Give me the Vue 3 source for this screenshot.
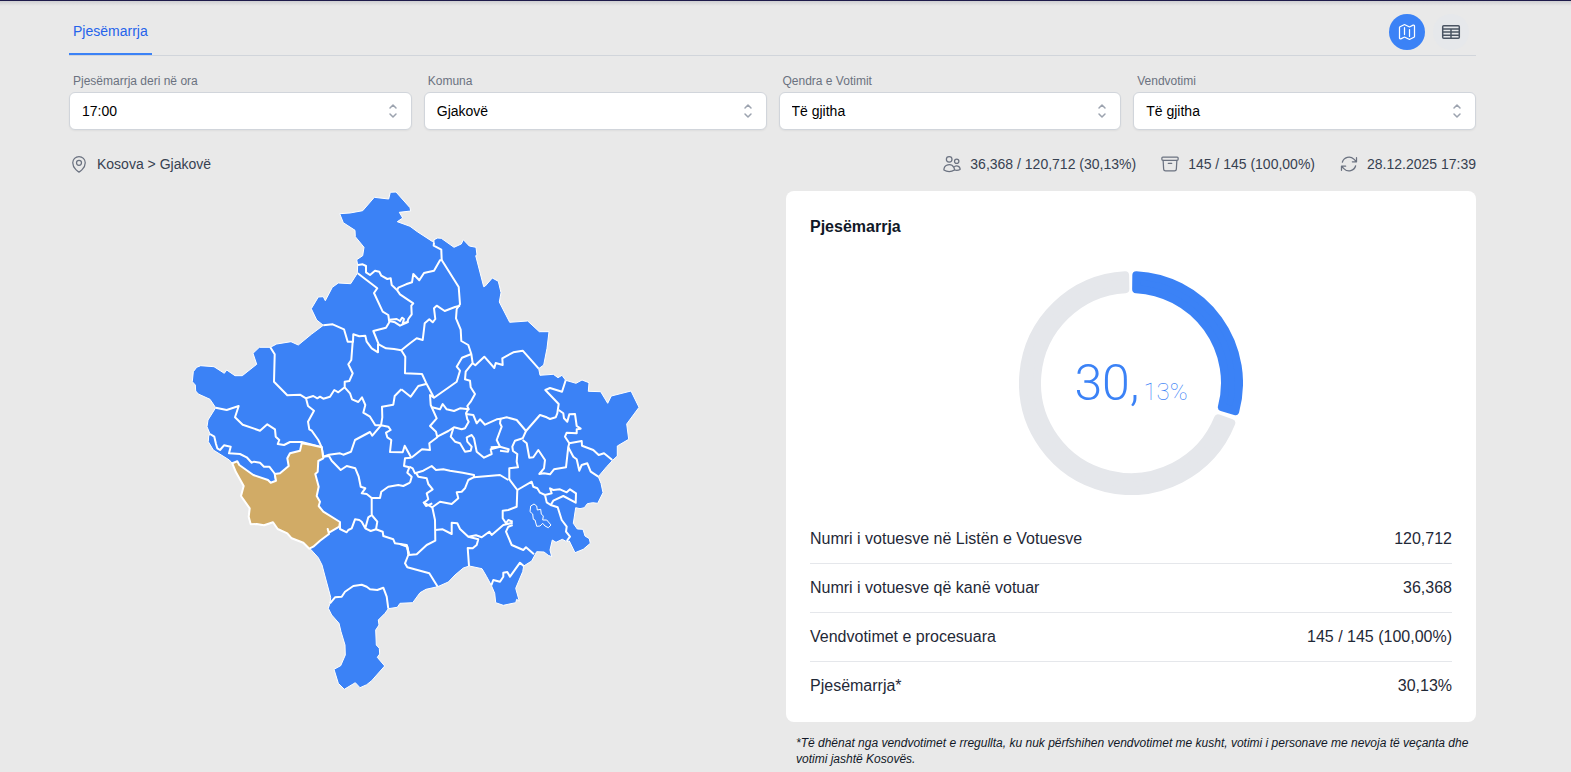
<script setup>
import { ref, computed } from 'vue'

const filters = ref([
  { id: 'ora', label: 'Pjesëmarrja deri në ora', value: '17:00' },
  { id: 'komuna', label: 'Komuna', value: 'Gjakovë' },
  { id: 'qendra', label: 'Qendra e Votimit', value: 'Të gjitha' },
  { id: 'vendvotimi', label: 'Vendvotimi', value: 'Të gjitha' },
])

const rows = [
  { label: 'Numri i votuesve në Listën e Votuesve', value: '120,712' },
  { label: 'Numri i votuesve që kanë votuar', value: '36,368' },
  { label: 'Vendvotimet e procesuara', value: '145 / 145 (100,00%)' },
  { label: 'Pjesëmarrja*', value: '30,13%' },
]

const facts = [
  {
    text: '36,368 / 120,712 (30,13%)',
    icon: 'M15 19.128a9.38 9.38 0 0 0 2.625.372 9.337 9.337 0 0 0 4.121-.952 4.125 4.125 0 0 0-7.533-2.493M15 19.128v-.003c0-1.113-.285-2.16-.786-3.07M15 19.128v.106A12.318 12.318 0 0 1 8.624 21c-2.331 0-4.512-.645-6.374-1.766l-.001-.109a6.375 6.375 0 0 1 11.964-3.07M12 6.375a3.375 3.375 0 1 1-6.75 0 3.375 3.375 0 0 1 6.75 0Zm8.25 2.25a2.625 2.625 0 1 1-5.25 0 2.625 2.625 0 0 1 5.25 0Z',
  },
  {
    text: '145 / 145 (100,00%)',
    icon: 'm20.25 7.5-.625 10.632a2.25 2.25 0 0 1-2.247 2.118H6.622a2.25 2.25 0 0 1-2.247-2.118L3.75 7.5M10 11.25h4M3.375 7.5h17.25c.621 0 1.125-.504 1.125-1.125v-1.5c0-.621-.504-1.125-1.125-1.125H3.375c-.621 0-1.125.504-1.125 1.125v1.5c0 .621.504 1.125 1.125 1.125Z',
  },
  {
    text: '28.12.2025 17:39',
    icon: 'M16.023 9.348h4.992v-.001M2.985 19.644v-4.992m0 0h4.992m-4.993 0 3.181 3.183a8.25 8.25 0 0 0 13.803-3.7M4.031 9.865a8.25 8.25 0 0 1 13.803-3.7l3.181 3.182m0-4.991v4.99',
  },
]

// Ring segment inset by half of its round-joined stroke, which rounds the corners.
const INSET = 4
function ringSegment(from, to, inner = 90, outer = 112) {
  const ri = inner + INSET
  const ro = outer - INSET
  const rad = (d) => (d * Math.PI) / 180
  const at = (r, a) => `${(r * Math.sin(a)).toFixed(2)} ${(-r * Math.cos(a)).toFixed(2)}`
  const pad = (r) => Math.asin(INSET / r)
  const large = to - from > 180 ? 1 : 0
  return [
    `M${at(ro, rad(from) + pad(ro))}`,
    `A${ro} ${ro} 0 ${large} 1 ${at(ro, rad(to) - pad(ro))}`,
    `L${at(ri, rad(to) - pad(ri))}`,
    `A${ri} ${ri} 0 ${large} 0 ${at(ri, rad(from) + pad(ri))}Z`,
  ].join('')
}
const share = 30.13
const sharePath = computed(() => ringSegment(0.7, share * 3.6 - 1.2))
const restPath = computed(() => ringSegment(share * 3.6 + 1.2, 359))

// Map sheets: every sheet has its own origin and stores points in thirds of a unit.
const sheets = {
  north: [300, 185],
  west: [180, 330],
  east: [380, 330],
  southeast: [400, 460],
  south: [290, 520],
}
function points(sheet, list) {
  const [ox, oy] = sheets[sheet]
  return list
    .trim()
    .split(/\s+/)
    .map((p) => {
      const [x, y] = p.split(',').map(Number)
      return `${(ox + x / 3).toFixed(1)},${(oy + y / 3).toFixed(1)}`
    })
    .join(' ')
}

const outline = [
  points('north', '119,86 150,84 188,77 223,37 240,39 266,42 271,22 288,21 330,68 332,78 298,82 308,99 292,110 330,124 352,140 398,170 402,172 402,164 413,159 424,160 462,187 484,177 490,164 508,183 528,187 531,210 527,212 551,305 556,303 577,279 595,289 603,323 598,351 629,412 683,408 718,440 747,440 741,490 731,540 716,551'),
  points('east', '480,136 520,133 534,143 546,136 557,151 588,160 606,150 627,158 625,184 662,185 683,220 694,198 753,183 777,232 740,282 746,328 712,348 712,378 697,392 680,410 655,440'),
  points('southeast', '595,50 603,70 609,98 593,130 578,128 562,131 553,143 540,146 527,143 520,190 532,207 549,208 555,228 568,236 571,250 550,268 525,278 508,243 500,245 487,238 468,247 457,240 450,270 455,290 445,286 432,276 410,275 395,303 371,318 368,335 347,385 358,424 350,418 347,428 310,436 287,428 284,400 274,376 260,350 246,326 208,318 190,324 165,345 145,366 113,380'),
  points('south', '408,208 390,218 368,248 330,250 322,262 295,266 285,280 265,300 267,315 257,330 259,375 268,385 269,402 262,412 284,438 245,482 230,494 210,503 196,488 163,508 145,490 132,448 152,437 166,405 165,375 153,335 147,310 125,285 115,265 120,250 122,232 108,180 96,135 85,113 62,88'),
  points('west', '388,656 370,638 335,625 322,610 293,597 279,577 252,586 230,582 212,583 206,560 209,535 183,498 191,468 168,427 157,400 148,390 100,360 85,335 86,318 90,312 81,290 84,270 107,233 90,208 55,192 47,183 46,165 37,155 40,125 50,112 62,107 102,110 133,130 140,120 165,137 187,137 230,103 219,70 238,52 271,52 290,42 333,35 355,45 395,12'),
  points('north', '70,421 50,405 34,371 55,336 70,335 76,347 97,307 115,294 152,296 172,265 173,240 170,224 188,212 192,187 166,155 165,136 130,113'),
].join(' ')

const selected = points('west', '157,400 172,394 178,405 220,435 264,450 272,458 288,452 284,432 300,430 326,408 322,385 330,370 360,362 365,340 395,345 425,352 430,385 415,393 413,425 406,432 416,470 410,498 420,515 416,528 430,545 480,576 478,590 447,608 443,597 447,612 420,632 400,650 388,656 370,638 335,625 322,610 293,597 279,577 252,586 230,582 212,583 206,560 209,535 183,498 191,468 168,427')

const enclave = points('southeast', '392,138 402,132 410,138 412,150 422,148 424,162 430,168 428,180 440,180 453,195 445,203 435,198 428,190 420,198 410,199 405,180 400,178 398,162 390,155')

const borders = {
  north: [
    '402,172 401,182 424,194 425,225 420,226 402,257 385,261 372,264 358,286 340,267 336,292 318,298 295,308 292,314',
    '425,225 476,306 480,358 470,372 468,400 482,434 484,468 505,480 514,507 518,535 526,541 553,515 583,549 587,534 608,540 607,520 640,502 668,497 716,551',
    '174,240 188,238 198,243 198,262 210,270 225,257 238,260 244,272 262,282 272,280 275,300 290,314 300,328 340,355 334,362 335,388 325,402 322,412 300,422 285,412 268,408',
    '173,265 232,310 222,324 248,380 265,390 268,412 258,428 220,438 236,478 258,490 282,492 304,496 330,475 350,460 368,465 374,415 388,403 398,412 406,402 402,370 410,362 434,378 465,366 480,362',
    '234,476 234,502 215,490 200,470 196,452 178,454 160,448 159,470 143,470 132,433 98,418 70,421',
    '268,404 290,402 300,408 306,398 312,402 308,415 326,410',
  ],
  west: [
    '271,52 284,73 282,155 322,196 360,194 378,205 384,228 402,242 384,275 388,298 395,302 415,330 425,352',
    '378,205 400,198 412,205 420,200 430,206 450,200 463,180 475,187 494,172 494,155 508,153 518,130 505,103 514,90 518,35',
    '494,172 510,190 516,208 535,216 546,202 556,225 550,248 570,260 586,286 603,286 607,262 606,230 640,224 644,198 664,178',
    '603,286 577,317 570,306 525,330 513,365 490,374 480,370 447,374 430,380',
    '603,286 625,290 632,300 618,308 622,322 634,330 630,366 668,367 674,347 694,383',
    '107,233 140,240 176,228 165,262 188,284 240,302 262,283 285,298 287,320 298,330 293,342 312,345 330,336 365,336 425,352 430,380',
    '90,312 103,320 108,342 112,355 120,360 132,346 152,350 147,370 180,372 200,382 215,398 222,395 240,398 252,410 268,410 285,432 288,452',
    '430,380 447,378 455,392 482,420 500,408 526,415 536,440 542,470 556,475 545,490 560,492 575,504 600,504 604,485 625,470 655,465 670,468 690,458',
    '575,504 575,555 565,562 556,595 545,575 538,570 525,568 515,595 505,600 500,607 480,597 480,576',
    '575,555 592,575 588,598 572,603 556,595',
    '588,598 608,605 610,618 640,628 645,640 680,645 686,670',
  ],
  east: [
    '64,61 76,80 75,130 126,132 138,158 162,203',
    '64,178 92,200 115,168 138,162',
    '274,72 246,83 230,110 240,122 230,155 162,203 150,195 152,225 170,265 150,288 168,305 172,322 148,340 150,360 126,358 94,383',
    '277,100 257,125 255,148 270,152 272,172 285,192 272,215 262,228 266,238 240,235 222,243 200,238 188,222 180,238 156,232',
    '266,235 258,250 262,268 266,275 255,295 245,298 222,292 205,303 172,320',
    '258,252 280,255 290,280 300,268 315,284 350,268 362,266 360,280 365,290 350,330 360,350 332,358 335,372 312,383 290,365 282,325 275,315 260,322 262,335 275,350 272,362 255,365 240,340 225,335 212,320 220,295',
    '362,266 380,262 410,270 438,303 428,325 405,332 397,350 399,363 412,372 410,395 414,412 388,415 388,450',
    '332,352 360,350 386,358 384,365 360,362',
    '438,303 480,255 500,262 510,267 527,262 532,250 536,222 496,180 510,174 546,185 557,151',
    '536,240 550,250 552,265 562,275 568,253 585,252 590,288 602,296 590,298 590,310 560,308 555,320 568,340 605,333 606,347 640,360 656,375 672,370 697,390',
    '428,330 440,340 448,383 460,382 475,360 495,390 492,415 478,432 492,430 510,433 522,418 558,412 565,350 568,340',
    '565,352 580,380 590,388 598,422 605,405 622,400 632,425 655,440',
    '94,383 75,385 72,408 88,412',
  ],
  southeast: [
    '28,22 22,38 35,50 30,68',
    '28,20 38,25 45,40 70,32 95,18 108,30 130,28 150,32 188,38 222,45 222,52 300,45 325,60',
    '48,38 55,50 80,55 85,72 98,88 80,100 85,118 72,128 97,142 120,125 155,132 175,115 170,97 185,95 195,85 205,60 225,50',
    '70,125 78,138 97,130',
    '97,142 105,180 106,242 80,255 50,283 25,285 22,260 0,252',
    '25,285 15,310 22,322 88,340 113,380',
    '106,210 128,208 155,222 155,188 172,190 180,207 205,230 235,238 230,255 218,265 203,264 207,318',
    '205,230 228,226 245,232 268,215 275,225 310,195 338,188',
    '328,58 352,90 350,140 325,150 308,152 308,175 318,190 325,180 338,185',
    '338,195 325,200 318,215 335,255 370,270 378,262 402,283',
    '352,90 395,65 400,80 412,85 420,98 435,105 440,127 452,135 460,122 490,108 527,128 528,100 510,88 500,97 480,88 460,90 450,85 455,100 435,105',
    '452,135 473,142 485,180 500,200 498,215 510,230 500,243',
    '274,376 280,360 300,365 310,350 310,338 322,336 330,350 360,308 371,318',
  ],
  south: [
    '120,250 135,232 155,230 165,215 190,198 215,194 230,200 240,208 262,210 280,203 290,230 295,266',
    '350,75 357,103',
  ],
}
const borderLines = Object.entries(borders).flatMap(([sheet, lines]) =>
  lines.map((line) => points(sheet, line)),
)
</script>

<template>
  <div class="page">
    <header class="tabs">
      <nav><a class="tab" href="#pjesemarrja">Pjesëmarrja</a></nav>
      <div class="views">
        <button class="view active" type="button" aria-label="Harta">
          <svg viewBox="0 0 24 24" class="icon">
            <path d="M9 6.75V15m6-6v8.25m.503 3.498 4.875-2.437c.381-.19.622-.58.622-1.006V4.82c0-.836-.88-1.38-1.628-1.006l-3.869 1.934c-.317.159-.69.159-1.006 0L9.503 3.252a1.125 1.125 0 0 0-1.006 0L3.622 5.689C3.24 5.88 3 6.27 3 6.695V19.18c0 .836.88 1.38 1.628 1.006l3.869-1.934c.317-.159.69-.159 1.006 0l4.994 2.497c.317.158.69.158 1.006 0Z" />
          </svg>
        </button>
        <button class="view" type="button" aria-label="Tabela">
          <svg viewBox="0 0 20 20" class="icon">
            <rect x="1.7" y="3.7" width="16.6" height="12.6" rx="1" />
            <path d="M1.7 7h16.6M1.7 10.1h16.6M1.7 13.2h16.6M10 7v9.3" />
          </svg>
        </button>
      </div>
    </header>

    <form class="filters">
      <div v-for="f in filters" :key="f.id" class="field">
        <label :for="f.id">{{ f.label }}</label>
        <div class="select-box">
          <select :id="f.id" v-model="f.value">
            <option>{{ f.value }}</option>
          </select>
          <svg viewBox="0 0 20 20" class="chevrons"><path d="m7 7 3-3 3 3m0 6-3 3-3-3" /></svg>
        </div>
      </div>
    </form>

    <div class="info">
      <div class="fact">
        <svg viewBox="0 0 24 24" class="icon">
          <path d="M15 10.5a3 3 0 1 1-6 0 3 3 0 0 1 6 0Z" />
          <path d="M19.5 10.5c0 7.142-7.5 11.25-7.5 11.25S4.5 17.642 4.5 10.5a7.5 7.5 0 1 1 15 0Z" />
        </svg>
        <span>Kosova &gt; Gjakovë</span>
      </div>
      <div class="facts">
        <div v-for="f in facts" :key="f.text" class="fact">
          <svg viewBox="0 0 24 24" class="icon"><path :d="f.icon" /></svg>
          <span>{{ f.text }}</span>
        </div>
      </div>
    </div>

    <main class="content">
      <div class="map">
        <svg viewBox="189 191 451 500">
          <polygon class="land" :points="outline" />
          <polyline v-for="(line, i) in borderLines" :key="i" class="border" :points="line" />
          <polygon class="enclave" :points="enclave" />
          <polygon class="selected" :points="selected" />
        </svg>
      </div>

      <section class="side">
        <div class="card">
          <h2>Pjesëmarrja</h2>
          <div class="donut">
            <svg viewBox="-112 -112 224 224">
              <path class="rest" :d="restPath" />
              <path class="share" :d="sharePath" />
            </svg>
            <div class="percent">30,<small>13%</small></div>
          </div>
          <table>
            <tbody>
              <tr v-for="r in rows" :key="r.label">
                <th scope="row">{{ r.label }}</th>
                <td>{{ r.value }}</td>
              </tr>
            </tbody>
          </table>
        </div>
        <p class="note">
          *Të dhënat nga vendvotimet e rregullta, ku nuk përfshihen vendvotimet me kusht, votimi i
          personave me nevoja të veçanta dhe votimi jashtë Kosovës.
        </p>
      </section>
    </main>
  </div>
</template>

<style>
body {
  background: #e9e9e9;
}
</style>

<style scoped>
.page {
  box-sizing: border-box;
  padding: 0 95px 0 69px;
  border-top: 1px solid #1e1b4b;
  background: linear-gradient(#cfcfd2, #e9e9e9) top / 100% 5px no-repeat;
  font-family: "Liberation Sans", Arial, sans-serif;
  font-size: 14px;
  line-height: 20px;
  color: #374151;
}
.tabs {
  display: flex;
  justify-content: space-between;
  align-items: flex-end;
  height: 54px;
  border-bottom: 1px solid #d1d5db;
}
.tab {
  display: block;
  padding: 0 4px 12px;
  border-bottom: 2px solid #3b82f6;
  color: #2563eb;
  text-decoration: none;
}
.views {
  display: flex;
  gap: 8px;
  padding: 0 7px 5px 0;
}
.view {
  display: flex;
  align-items: center;
  justify-content: center;
  width: 36px;
  height: 36px;
  padding: 0;
  border: 0;
  border-radius: 50%;
  background: #e6e8eb;
  color: #4b5563;
}
.view.active {
  background: #3b82f6;
  color: #fff;
}
.icon {
  flex: none;
  width: 20px;
  height: 20px;
  fill: none;
  stroke: currentColor;
  stroke-width: 1.5;
  stroke-linecap: round;
  stroke-linejoin: round;
}
.filters {
  display: grid;
  grid-template-columns: repeat(4, 1fr);
  gap: 12px;
  margin-top: 17px;
}
.field label {
  display: block;
  padding: 0 4px;
  font-size: 12px;
  line-height: 16px;
  color: #6b7280;
}
.select-box {
  position: relative;
  margin-top: 3px;
}
.select-box select {
  display: block;
  box-sizing: border-box;
  width: 100%;
  height: 38px;
  padding: 0 40px 0 12px;
  appearance: none;
  border: 1px solid #d1d5db;
  border-radius: 6px;
  background: #fff;
  box-shadow: 0 1px 2px rgba(0, 0, 0, 0.05);
  font: inherit;
  color: #000;
}
.chevrons {
  position: absolute;
  top: 9px;
  right: 9px;
  width: 20px;
  height: 20px;
  pointer-events: none;
  fill: none;
  stroke: #9ca3af;
  stroke-width: 1.5;
  stroke-linecap: round;
  stroke-linejoin: round;
}
.info {
  display: flex;
  justify-content: space-between;
  margin-top: 24px;
}
.facts {
  display: flex;
  gap: 24px;
}
.fact {
  display: flex;
  align-items: center;
  gap: 8px;
}
.fact .icon {
  color: #6b7280;
}
.content {
  display: grid;
  grid-template-columns: 1fr 1fr;
  gap: 27px;
  margin-top: 17px;
}
.map {
  display: flex;
  justify-content: center;
  align-items: flex-start;
}
.map svg {
  width: 451px;
  max-width: 100%;
}
.land {
  fill: #3b82f6;
  stroke: #fff;
  stroke-width: 1;
  stroke-linejoin: round;
}
.border {
  fill: none;
  stroke: #fff;
  stroke-width: 2;
  stroke-linejoin: round;
}
.enclave {
  fill: none;
  stroke: #fff;
  stroke-width: 1;
}
.selected {
  fill: #d1ab66;
  stroke: #fff;
  stroke-width: 2;
  stroke-linejoin: round;
}
.card {
  padding: 24px 24px 12px;
  border-radius: 8px;
  background: #fff;
}
h2 {
  margin: 0;
  font-size: 16px;
  line-height: 24px;
  color: #111827;
}
.donut {
  display: grid;
  place-items: center;
  margin: 32px 0 20px;
}
.donut > * {
  grid-area: 1 / 1;
}
.donut svg {
  display: block;
  width: 224px;
}
.donut path {
  stroke-width: 8;
  stroke-linejoin: round;
}
.share {
  fill: #3b82f6;
  stroke: #3b82f6;
}
.rest {
  fill: #e5e7eb;
  stroke: #e5e7eb;
}
.percent {
  padding-top: 8px;
  font-family: Roboto, "Liberation Sans", sans-serif;
  font-size: 50px;
  font-weight: 300;
  line-height: 48px;
  color: #3b82f6;
}
.percent small {
  margin-left: 4px;
  font-size: 24px;
  font-weight: 100;
}
table {
  width: 100%;
  border-collapse: separate;
  border-spacing: 0;
  font-size: 16px;
  line-height: 24px;
  color: #1f2937;
}
th,
td {
  padding: 12px 0;
  border-bottom: 1px solid #e5e7eb;
  font-weight: 400;
  text-align: left;
}
td {
  text-align: right;
}
tr:last-child > * {
  border-bottom: 0;
}
.note {
  margin: 0;
  padding: 13px 0 0 10px;
  font-size: 12px;
  font-style: italic;
  line-height: 16px;
  color: #111827;
}
</style>
